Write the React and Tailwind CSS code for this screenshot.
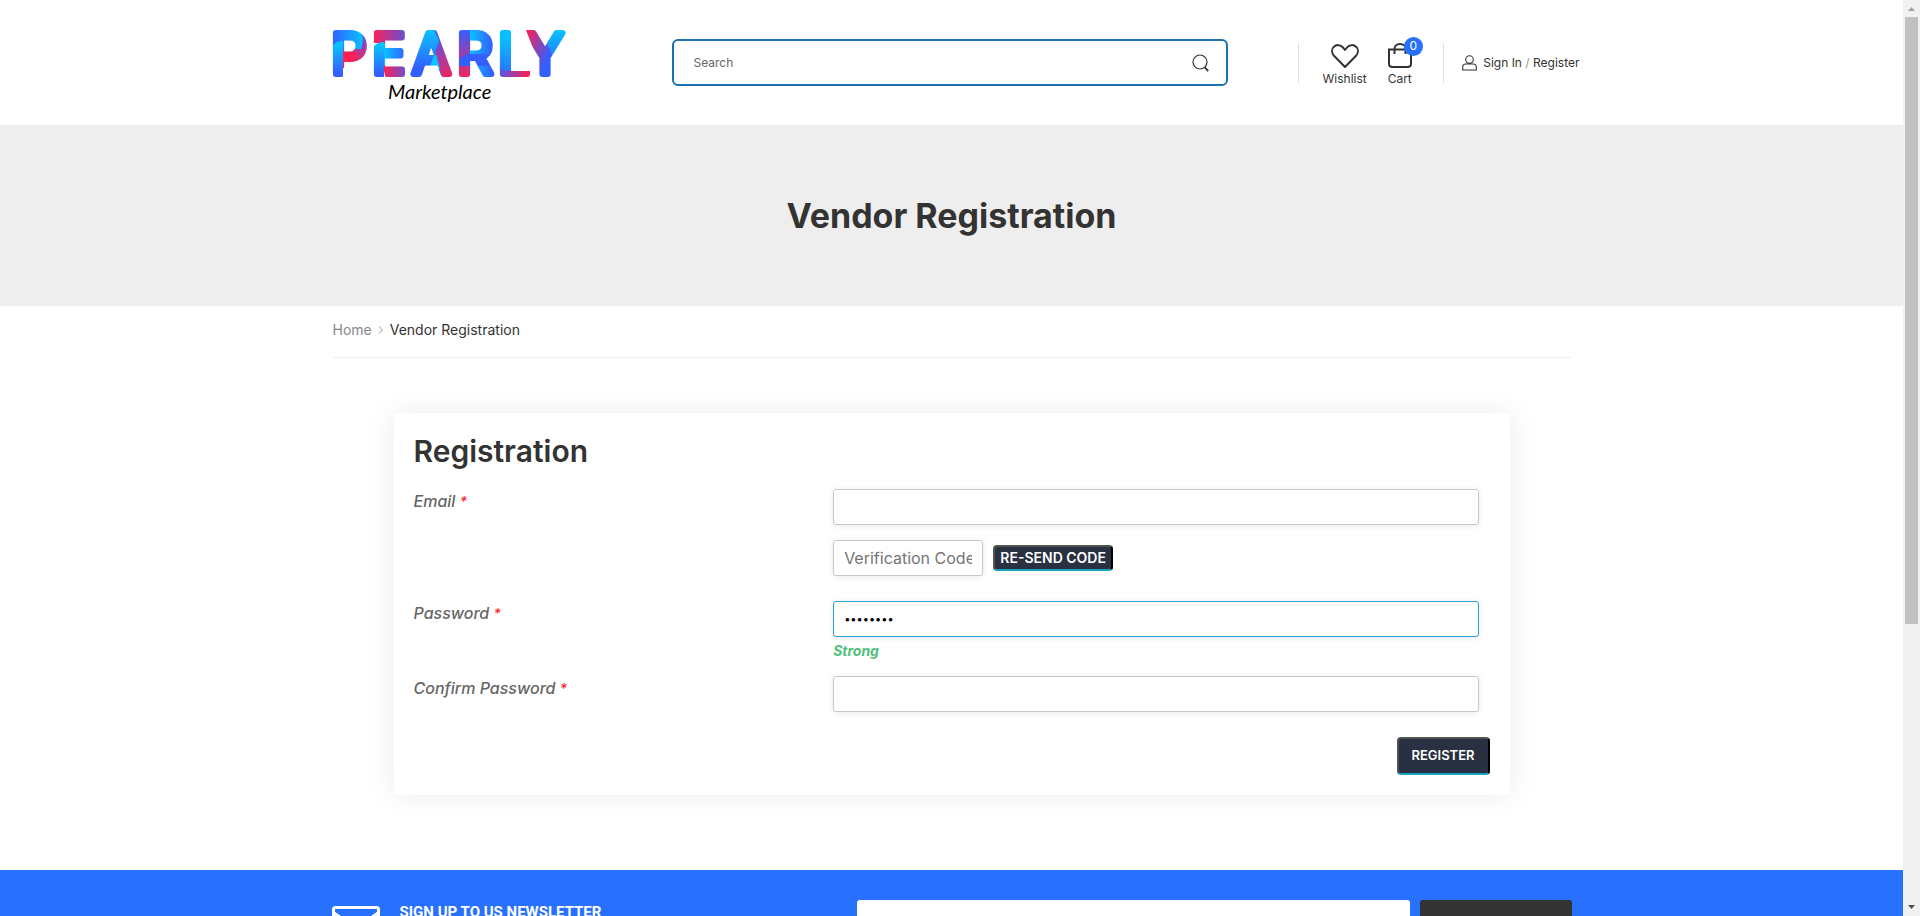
import React from "react";

const inputBase =
  "block h-9 rounded-[3px] border bg-white px-2.5 text-black shadow-[0_1px_6px_rgba(0,0,0,0.09)] outline-none placeholder:text-[#757575]";

const darkButton =
  "shrink-0 rounded-[4px] border-2 border-t-[#4f5452] border-r-black border-b-[#17a2c0] border-l-[#4f5452] bg-[#293042] text-white uppercase";

function Logo() {
  return (
    <svg viewBox="0 0 236 80" className="block h-20 w-[236px]" role="img" aria-label="Pearly Marketplace">
      <defs>
        <linearGradient id="stem" x1="0" y1="0" x2="0" y2="1">
          <stop offset="0.1" stopColor="#08c2ff" />
          <stop offset="0.75" stopColor="#345fff" />
        </linearGradient>
        <linearGradient id="blueCyan">
          <stop offset="0" stopColor="#345fff" />
          <stop offset="1" stopColor="#08c2ff" />
        </linearGradient>
        <linearGradient id="cyanBlue">
          <stop offset="0" stopColor="#08c2ff" />
          <stop offset="0.8" stopColor="#345fff" />
        </linearGradient>
        <linearGradient id="redBlue">
          <stop offset="0" stopColor="#ff2052" />
          <stop offset="1" stopColor="#4a58f0" />
        </linearGradient>
        <linearGradient id="blueRed">
          <stop offset="0" stopColor="#4a58f0" />
          <stop offset="0.85" stopColor="#ff2052" />
        </linearGradient>
        <linearGradient id="blueRedDown" x1="0" y1="0" x2="0" y2="1">
          <stop offset="0.1" stopColor="#3a5dff" />
          <stop offset="0.95" stopColor="#ff2052" />
        </linearGradient>
        <linearGradient id="redBlueDiag" x1="0" y1="0" x2="1" y2="1">
          <stop offset="0.1" stopColor="#ff2052" />
          <stop offset="0.7" stopColor="#345fff" />
        </linearGradient>
        <linearGradient id="blueCyanDown" x1="0" y1="0" x2="0" y2="1">
          <stop offset="0.2" stopColor="#08c2ff" />
          <stop offset="1" stopColor="#345fff" />
        </linearGradient>
        <mask id="word" maskUnits="userSpaceOnUse" x="0" y="0" width="236" height="58">
          <g
            fill="#fff"
            stroke="#fff"
            strokeWidth="6"
            strokeLinejoin="round"
            fontFamily="Inter, sans-serif"
            fontWeight="400"
            fontSize="56"
          >
            <text y="49">
              <tspan x="-1">P</tspan>
              <tspan x="40">E</tspan>
              <tspan x="80">A</tspan>
              <tspan x="125">R</tspan>
              <tspan x="166">L</tspan>
              <tspan x="194">Y</tspan>
            </text>
          </g>
        </mask>
      </defs>
      <g mask="url(#word)">
        <rect x="0" y="0" width="41" height="42" fill="url(#blueRedDown)" />
        <path d="M0 0H26Q34 10 29 24H0Z" fill="url(#blueCyan)" />
        <path d="M10 27H26Q22 38 10 44Z" fill="#ff2052" />
        <path d="M0 58V26Q0 16 11 16V58Z" fill="url(#stem)" />

        <rect x="41" y="0" width="38" height="18" fill="url(#redBlue)" />
        <path d="M41 58V26Q41 17 52 17V58Z" fill="url(#stem)" />
        <rect x="52" y="18" width="27" height="22" fill="url(#cyanBlue)" />
        <path d="M52 40H79V58H58Q51 52 52 40Z" fill="url(#redBlue)" />

        <path d="M79 58V0H103L122 58Z" fill="url(#stem)" />
        <rect x="94" y="30" width="24" height="14" fill="#08c2ff" />
        <path d="M96 0H112L128 58H112Z" fill="url(#blueRedDown)" />
        <path d="M78 58L97 0H100L107 16L92 58Z" fill="url(#stem)" />

        <rect x="126" y="0" width="12" height="58" fill="url(#blueRedDown)" />
        <rect x="138" y="0" width="28" height="58" fill="url(#cyanBlue)" />
        <path d="M126 42Q126 29 140 29H166V41H126Z" fill="#345fff" />

        <rect x="166" y="0" width="13" height="58" fill="url(#blueCyanDown)" />
        <path d="M166 40Q168 46 178 46H202V58H166Z" fill="url(#blueRed)" />

        <path d="M236 0H220L206 30V58H220Z" fill="url(#stem)" />
        <path d="M192 0H206L221 32V58H206V36Z" fill="url(#redBlueDiag)" />
      </g>
      <text x="56" y="74" fontFamily="Lato, sans-serif" fontStyle="italic" fontWeight="400" fontSize="20" fill="#000">
        Marketplace
      </text>
    </svg>
  );
}

function Header() {
  return (
    <header className="mx-auto flex h-[125px] w-full max-w-[1240px] shrink-0 items-center">
      <a href="#" className="mt-1 w-[340px] shrink-0">
        <Logo />
      </a>
      <form className="flex h-[47px] min-w-0 flex-1 items-center rounded-md border-2 border-[#1a73ae] px-5">
        <input
          type="text"
          aria-label="Search"
          placeholder="Search"
          className="min-w-0 flex-1 text-xs outline-none placeholder:text-[#666]"
        />
        <button type="button" aria-label="Submit search" className="-mr-2 p-1">
          <svg viewBox="0 0 18 18" className="size-[18px]" fill="none" stroke="#333" strokeWidth="1.2">
            <circle cx="8" cy="8" r="7" />
            <path d="M12.6 13.2l3.6 4" strokeWidth="1.8" />
          </svg>
        </button>
      </form>
      <nav className="-mr-2 ml-[70px] flex w-[282px] shrink-0 items-center text-xs text-[#333]">
        <div className="flex h-10 items-center gap-5 border-l border-[#e1e1e1] pl-6">
          <a href="#" className="flex flex-col items-center gap-0.5 pt-1">
            <svg viewBox="0 0 28 26" className="h-[26px] w-7" fill="none" stroke="#333" strokeWidth="2">
              <path d="M14 24L3 12.8C.6 10 .4 6.200 2.700 3.900C5.600 1.200 9.700 1.700 12 4.500L14 7L16 4.500C18.300 1.700 22.400 1.200 25.300 3.900C27.600 6.200 27.400 10 25 12.800Z" strokeLinejoin="round" />
            </svg>
            <span className="leading-4">Wishlist</span>
          </a>
          <a href="#" className="relative flex flex-col items-center gap-0.5 pt-1">
            <svg viewBox="0 0 26 26" className="size-[26px]" fill="none" stroke="#333" strokeWidth="2">
              <path d="M2 6.500H24V20.500Q24 24 20.500 24H5.500Q2 24 2 20.500Z" />
              <path d="M7.500 11V6C7.500 3 10 1 13 1S18.500 3 18.500 6V11" />
            </svg>
            <span className="leading-4">Cart</span>
            <span className="absolute -top-0.5 -right-2.5 flex size-[19px] items-center justify-center rounded-full bg-[#2871ff] text-xs leading-none text-white">
              0
            </span>
          </a>
        </div>
        <div className="ml-auto flex h-10 items-center border-l border-[#e1e1e1] pl-[18px]">
          <svg viewBox="0 0 15 16" className="mr-1.5 h-4 w-[15px]" fill="none" stroke="#333" strokeWidth="1.100">
            <circle cx="7.500" cy="4.600" r="3.800" />
            <path d="M3.800 9H11.200Q14.300 9 14.300 12V15H.7V12Q.7 9 3.800 9Z" />
          </svg>
          <span className="whitespace-nowrap">
            <a href="#">Sign In</a> <span className="text-[#999]">/</span> <a href="#">Register</a>
          </span>
        </div>
      </nav>
    </header>
  );
}

function FieldLabel({ htmlFor, children }) {
  return (
    <label htmlFor={htmlFor} className="w-[39%] shrink-0 text-base leading-6 font-medium text-[#666] italic">
      {children} <span className="text-sm text-red-500">*</span>
    </label>
  );
}

function RegistrationForm() {
  return (
    <form className="mx-auto mt-[55px] w-full max-w-[1116px] rounded-[3px] bg-white p-5 shadow-[0_0_30px_rgba(0,0,0,0.08)]">
      <h2 className="text-3xl leading-9 font-semibold text-[#333]">Registration</h2>

      <div className="mt-5 flex">
        <FieldLabel htmlFor="email">Email</FieldLabel>
        <div className="w-[60%]">
          <input id="email" type="email" className={`${inputBase} w-full border-[#c8c8c8] text-base`} />
          <div className="mt-[15px] flex items-center gap-2.5">
            <input
              type="text"
              aria-label="Verification Code"
              placeholder="Verification Code"
              className={`${inputBase} w-[150px] border-[#c8c8c8] text-base`}
            />
            <button type="button" className={`${darkButton} h-[26px] w-[120px] text-sm leading-none font-semibold`}>
              Re-send code
            </button>
          </div>
        </div>
      </div>

      <div className="mt-[25px] flex">
        <FieldLabel htmlFor="password">Password</FieldLabel>
        <div className="w-[60%]">
          <input
            id="password"
            type="password"
            defaultValue="12345678"
            className={`${inputBase} w-full border-[#26a0d0] text-[11px]`}
          />
          <p className="mt-0.5 h-[26px] text-sm leading-6 font-bold text-[#4fbf7b] italic">Strong</p>
        </div>
      </div>

      <div className="mt-[11px] flex">
        <FieldLabel htmlFor="confirm">Confirm Password</FieldLabel>
        <div className="w-[60%]">
          <input id="confirm" type="password" className={`${inputBase} w-full border-[#c8c8c8] text-[11px]`} />
        </div>
      </div>

      <div className="mt-[25px] flex justify-end">
        <button type="submit" className={`${darkButton} h-[38px] w-[93px] text-[13px] font-semibold`}>
          Register
        </button>
      </div>
    </form>
  );
}

function Newsletter() {
  return (
    <footer className="mt-[75px] bg-[#2871ff] py-[30px]">
      <div className="mx-auto flex w-full max-w-[1240px] items-start">
        <svg viewBox="0 0 48 38" className="mt-1.5 h-[38px] w-12 shrink-0" fill="none" stroke="#fff" strokeWidth="3">
          <rect x="1.500" y="1.500" width="45" height="35" rx="2" />
          <path d="M2 7L24 22L46 7" />
        </svg>
        <h3 className="mt-0.5 ml-5 shrink-0 font-[Roboto,sans-serif] text-[15px] leading-5 font-bold text-white">
          SIGN UP TO US NEWSLETTER
        </h3>
        <form className="ml-auto flex w-[715px] gap-2.5">
          <input type="email" aria-label="Email address" className="h-12 min-w-0 flex-1 rounded-[3px] bg-white px-5 outline-none" />
          <button type="button" aria-label="Subscribe" className="h-12 w-[152px] rounded-[3px] bg-[#333]" />
        </form>
      </div>
    </footer>
  );
}

function ScrollRail() {
  return (
    <aside aria-hidden="true" className="flex w-[17px] shrink-0 flex-col items-center bg-[#f1f1f1]">
      <svg viewBox="0 0 17 17" className="size-[17px]" fill="#a3a3a3">
        <path d="M5 11L8.500 7L12 11Z" />
      </svg>
      <div className="h-[607px] w-[13px] bg-[#c1c1c1]" />
      <svg viewBox="0 0 17 17" className="mt-auto size-[17px]" fill="#505050">
        <path d="M5 6L8.500 10L12 6Z" />
      </svg>
    </aside>
  );
}

export default function App() {
  return (
    <div className="flex h-screen overflow-hidden bg-white font-[Inter,sans-serif]">
      <div className="min-w-0 flex-1 overflow-y-auto [scrollbar-width:none]">
        <Header />
        <section className="flex h-[181px] items-center justify-center bg-[#eee]">
          <h1 className="text-[34px] font-bold text-[#333]">Vendor Registration</h1>
        </section>
        <main>
          <nav aria-label="Breadcrumb" className="mx-auto w-full max-w-[1238px] border-b border-[#eee] pt-3.5 pb-[17px]">
            <ol className="flex items-center text-sm leading-5 text-[#333]">
              <li>
                <a href="#" className="text-[#888]">Home</a>
              </li>
              <li aria-hidden="true">
                <svg viewBox="0 0 6 8" className="mx-1.5 h-2 w-1.5" fill="none" stroke="#999">
                  <path d="M1 .5L4.500 4L1 7.500" />
                </svg>
              </li>
              <li>Vendor Registration</li>
            </ol>
          </nav>
          <RegistrationForm />
        </main>
        <Newsletter />
      </div>
      <ScrollRail />
    </div>
  );
}
